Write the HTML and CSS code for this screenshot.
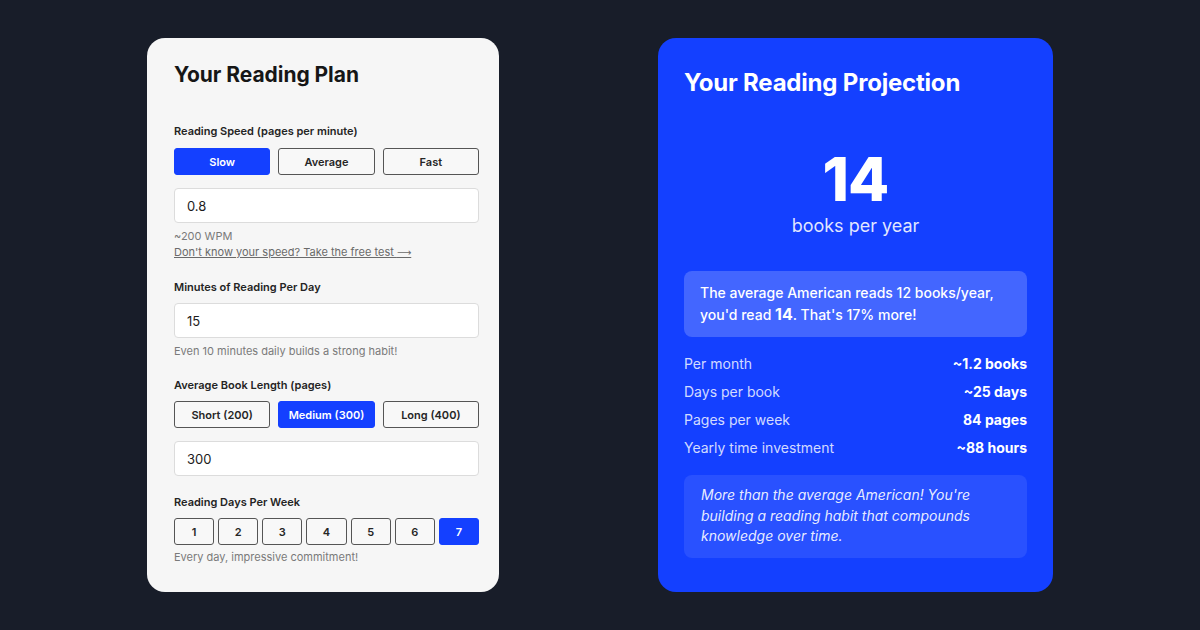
FILE: index.html
```html
<!DOCTYPE html>
<html lang="en">
<head>
<meta charset="utf-8">
<title>Reading Plan</title>
<link rel="stylesheet" href="styles.css">
</head>
<body>
<main class="stage">
  <section class="plan">
    <h1 class="plan-title">Your Reading Plan</h1>

    <div class="field first">
      <div class="label">Reading Speed (pages per minute)</div>
      <div class="btn-row">
        <button class="opt active">Slow</button>
        <button class="opt">Average</button>
        <button class="opt">Fast</button>
      </div>
      <div class="input">0.8</div>
      <div class="hint">~200 WPM</div>
      <div class="hint link">Don't know your speed? Take the free test <span class="arrow">⟶</span></div>
    </div>

    <div class="field">
      <div class="label">Minutes of Reading Per Day</div>
      <div class="input tight">15</div>
      <div class="hint">Even 10 minutes daily builds a strong habit!</div>
    </div>

    <div class="field">
      <div class="label">Average Book Length (pages)</div>
      <div class="btn-row">
        <button class="opt">Short (200)</button>
        <button class="opt active">Medium (300)</button>
        <button class="opt">Long (400)</button>
      </div>
      <div class="input">300</div>
    </div>

    <div class="field">
      <div class="label">Reading Days Per Week</div>
      <div class="day-row">
        <button class="day">1</button>
        <button class="day">2</button>
        <button class="day">3</button>
        <button class="day">4</button>
        <button class="day">5</button>
        <button class="day">6</button>
        <button class="day active">7</button>
      </div>
      <div class="hint">Every day, impressive commitment!</div>
    </div>
  </section>

  <section class="proj">
    <h2 class="proj-title">Your Reading Projection</h2>
    <div class="big">14</div>
    <div class="big-sub">books per year</div>
    <div class="compare">
      <span class="line">The average American reads 12 books/year,</span>
      <span class="line">you'd read <strong>14</strong>. That's 17% more!</span>
    </div>
    <div class="stats">
      <div class="stat"><span class="k">Per month</span><span class="v">~1.2 books</span></div>
      <div class="stat"><span class="k">Days per book</span><span class="v">~25 days</span></div>
      <div class="stat"><span class="k">Pages per week</span><span class="v">84 pages</span></div>
      <div class="stat"><span class="k">Yearly time investment</span><span class="v">~88 hours</span></div>
    </div>
    <div class="note">More than the average American! You're building a reading habit that compounds knowledge over time.</div>
  </section>
</main>
</body>
</html>
```

FILE: styles.css
```css
* { box-sizing: border-box; }
html, body { margin: 0; padding: 0; }
body {
  width: 1200px;
  height: 630px;
  background: #181d29;
  font-family: Inter, "Noto Sans", "Liberation Sans", sans-serif;
  overflow: hidden;
}
.stage {
  display: flex;
  justify-content: center;
  align-items: flex-start;
  gap: 159px;
  padding-top: 38px;
}

/* Left card */
.plan {
  width: 352px;
  height: 554px;
  background: #f6f6f6;
  border-radius: 18px;
  padding: 25px 20px 0 27px;
  color: #1c1c1c;
}
.plan-title {
  margin: 0;
  font-size: 21px;
  line-height: 24px;
  font-weight: 700;
  color: #161616;
  letter-spacing: -0.05px;
}
.field { margin-top: 18px; }
.field.first { margin-top: 36px; }
.label {
  font-size: 11px;
  line-height: 16px;
  font-weight: 600;
  color: #242424;
  margin-bottom: 8px;
}
.field.first .label { margin-bottom: 9px; }
.btn-row {
  display: flex;
  gap: 8px;
}
.opt, .day {
  flex: 1;
  height: 27px;
  margin: 0;
  padding: 0;
  border: 1.5px solid #555555;
  border-radius: 3px;
  background: #f8f8f8;
  color: #262626;
  font-family: inherit;
  font-size: 11px;
  font-weight: 600;
}
.opt.active, .day.active {
  background: #1440ff;
  border-color: #1440ff;
  color: #ffffff;
}
.day-row {
  display: flex;
  gap: 4px;
}
.input {
  margin-top: 13px;
  height: 35px;
  background: #ffffff;
  border: 1px solid #dcdcdc;
  border-radius: 4px;
  padding: 0 12px;
  display: flex;
  align-items: center;
  font-size: 13px;
  color: #1c1c1c;
}
.input.tight { margin-top: 8px; }
.hint {
  font-size: 11px;
  line-height: 16px;
  color: #7a7a7a;
}
.input + .hint { margin-top: 5px; }
.day-row + .hint { margin-top: 4px; }
.link {
  text-decoration: underline;
  color: #6a6a6a;
}
.arrow { font-family: "DejaVu Sans", sans-serif; font-size: 10px; }

/* Right card */
.proj {
  width: 395px;
  height: 554px;
  background: #1440ff;
  border-radius: 18px;
  padding: 30px 26px 0 26px;
  color: #ffffff;
}
.proj-title {
  margin: 0;
  font-size: 24px;
  line-height: 30px;
  font-weight: 700;
  letter-spacing: -0.2px;
}
.big {
  margin-top: 51px;
  text-align: center;
  font-size: 60px;
  line-height: 60px;
  font-weight: 800;
  letter-spacing: -1px;
}
.big-sub {
  margin-top: 5px;
  text-align: center;
  font-size: 18px;
  line-height: 24px;
  color: rgba(255, 255, 255, 0.88);
}
.compare {
  margin-top: 33px;
  background: rgba(255, 255, 255, 0.2);
  border-radius: 8px;
  padding: 11px 16px;
  font-size: 14px;
  line-height: 22px;
  font-weight: 500;
}
.compare .line { display: block; }
.compare strong {
  font-size: 16px;
  line-height: 16px;
  font-weight: 700;
}
.stats { margin-top: 13px; }
.stat {
  display: flex;
  justify-content: space-between;
  font-size: 14px;
  line-height: 28px;
}
.stat .k { color: rgba(255, 255, 255, 0.82); }
.stat .v { font-weight: 700; }
.note {
  margin-top: 13px;
  background: rgba(255, 255, 255, 0.09);
  border-radius: 8px;
  padding: 10px 16px 11px 17px;
  font-size: 14px;
  line-height: 20.5px;
  font-style: italic;
  color: rgba(255, 255, 255, 0.9);
}
```
